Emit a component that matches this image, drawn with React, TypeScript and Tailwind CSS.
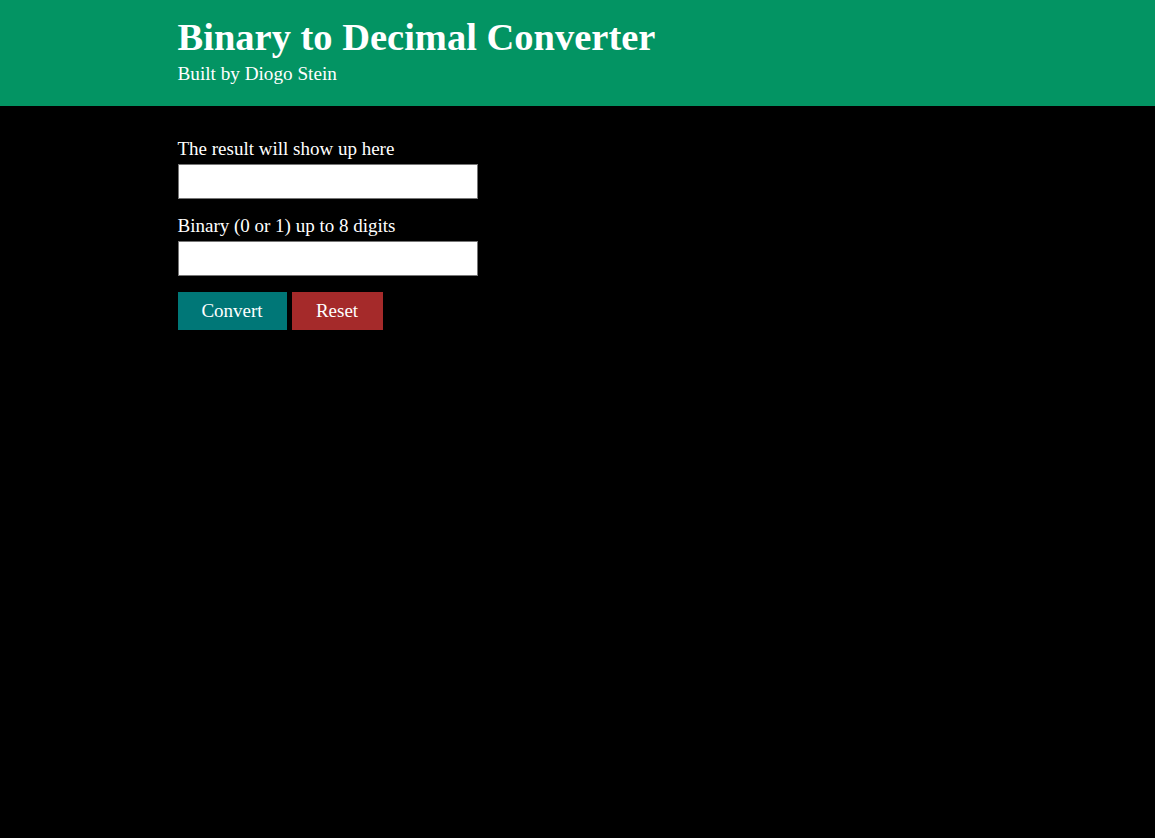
import { useState } from 'react';

export default function App() {
  const [result, setResult] = useState('');
  const [binary, setBinary] = useState('');

  const convert = () => {
    if (!/^[01]{1,8}$/.test(binary)) return;
    setResult(String(parseInt(binary, 2)));
  };

  const reset = () => {
    setResult('');
    setBinary('');
  };

  return (
    <div className="min-h-[838px] bg-black text-white" style={{ fontFamily: '"Liberation Serif", "Times New Roman", serif' }}>
      <header className="bg-[#039463]">
        <div className="mx-auto w-[800px] pt-[15px] pb-[21px]">
          <h1 className="text-[38.5px] font-bold leading-[44px]">Binary to Decimal Converter</h1>
          <p className="text-[19.2px] leading-[22px] mt-[4px]">Built by Diogo Stein</p>
        </div>
      </header>

      <main className="mx-auto w-[800px] pt-[32px]">
        <label className="block text-[19px] leading-[22px] mb-[4px]">The result will show up here</label>
        <input
          readOnly
          value={result}
          className="block w-[300px] h-[35px] bg-white text-black border border-[#767676] px-2 text-[18px]"
        />

        <label className="block text-[19px] leading-[22px] mb-[4px] mt-[16px]">Binary (0 or 1) up to 8 digits</label>
        <input
          value={binary}
          maxLength={8}
          onChange={(e) => setBinary(e.target.value)}
          className="block w-[300px] h-[35px] bg-white text-black border border-[#767676] px-2 text-[18px]"
        />

        <div className="flex gap-[5px] mt-[16px]">
          <button onClick={convert} className="w-[109px] h-[38px] bg-[#007777] text-white text-[19px]">
            Convert
          </button>
          <button onClick={reset} className="w-[91px] h-[38px] bg-[#a52a2a] text-white text-[19px]">
            Reset
          </button>
        </div>
      </main>
    </div>
  );
}
